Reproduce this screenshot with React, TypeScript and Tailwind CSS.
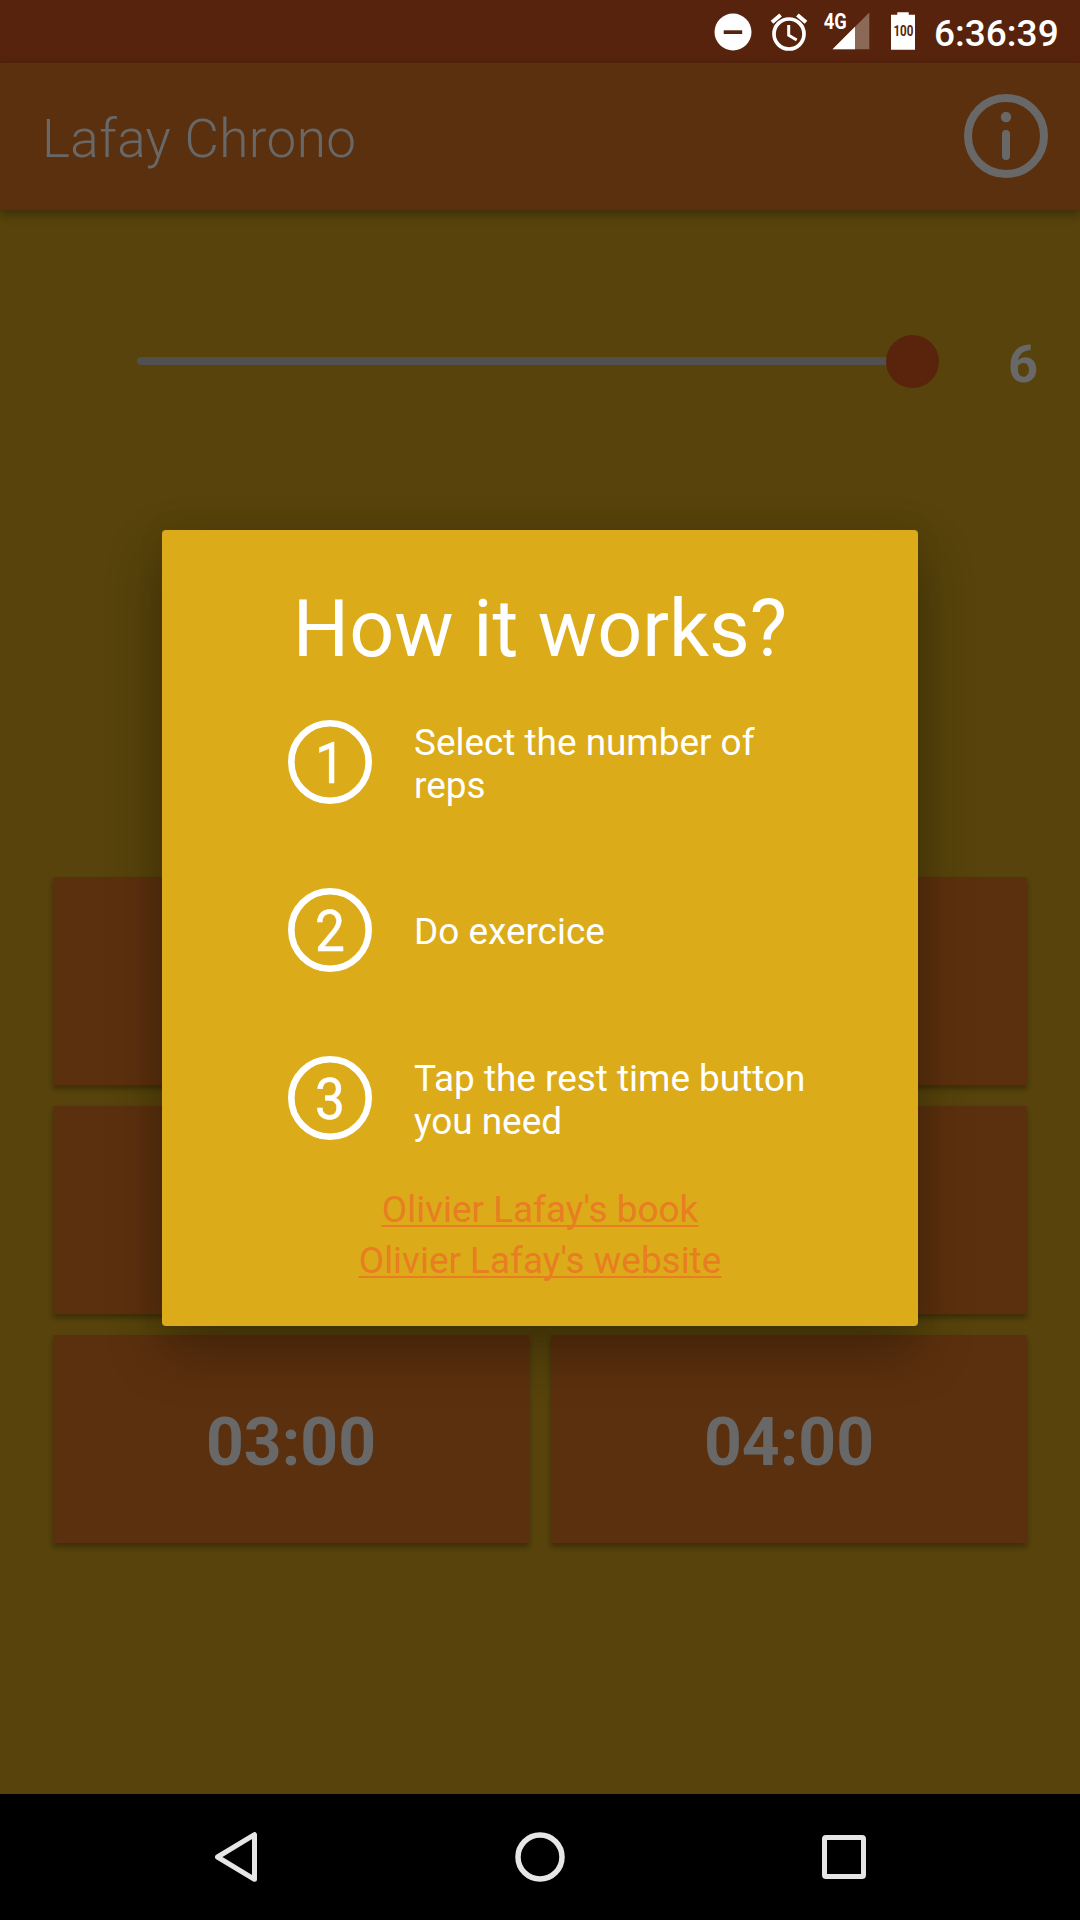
import React from "react";

function StatusBar() {
  return (
    <div className="flex h-[63px] w-full shrink-0 items-start bg-[#57230c] pl-[714px] text-white">
      <svg className="h-[63px] w-[215px] shrink-0" viewBox="714 0 215 63" fill="none">
        <circle cx="733" cy="32" r="18.5" fill="#fff" />
        <rect x="723.7" y="30.3" width="18.5" height="3.7" fill="#57230c" />
        <g stroke="#fff">
          <circle cx="789" cy="34" r="15" strokeWidth="3.7" />
          <path d="M788.7 25v10.2l8 4.8" strokeWidth="3" />
          <path d="M772 22.2l8.6-7.2M806 22.2l-8.6-7.2" strokeWidth="4" />
        </g>
        <path d="M869.3 12.5v36.8H832.5z" fill="#8c6856" />
        <path d="M855 26.8v22.5H832.5z" fill="#fff" />
        <text x="823.7" y="29" fill="#fff" fontSize="21.5" fontWeight="700" textLength="23" lengthAdjust="spacingAndGlyphs">4G</text>
        <path d="M897.3 12.2h11.4v2.6h6.3v35h-24v-35h6.3z" fill="#fff" />
        <text x="893.4" y="36" fill="#57230c" fontSize="14" fontWeight="700" textLength="20" lengthAdjust="spacingAndGlyphs">100</text>
      </svg>
      <span className="ml-[5px] mt-[12px] whitespace-nowrap text-[37px] font-medium leading-[43px]">6:36:39</span>
    </div>
  );
}

function AppBar() {
  return (
    <header className="relative flex h-[147px] w-full shrink-0 items-center justify-between bg-[#5b300e] pl-[42px] pr-8 text-[#686868] shadow-[0_4px_10px_rgba(0,0,0,0.35)]">
      <h1 className="mt-[5px] text-[53px] font-light leading-[62px] tracking-[0.4px]">Lafay Chrono</h1>
      <svg className="-mt-px h-[84px] w-[84px]" viewBox="0 0 84 84">
        <circle cx="42" cy="42" r="38" fill="none" stroke="currentColor" strokeWidth="8" />
        <circle cx="42" cy="23" r="5.2" fill="currentColor" />
        <rect x="38" y="36" width="8" height="30" rx="4" fill="currentColor" />
      </svg>
    </header>
  );
}

function RepsSlider() {
  return (
    <div className="flex h-[53px] items-center pl-[137px]">
      <div className="mb-[2px] h-2 w-[752px] rounded-l-full bg-[#505050]" />
      <div className="-ml-[3px] h-[53px] w-[53px] shrink-0 rounded-full bg-[#5a240c]" />
      <span className="ml-[69px] mt-[4px] text-[52.5px] font-bold leading-[62px] text-[#686868]">6</span>
    </div>
  );
}

/* The first two rows lie behind the dialog, so only the last row is labelled. */
const times = ["", "", "", "", "03:00", "04:00"];

function TimeGrid() {
  return (
    <div className="mx-[53px] mt-[489px] grid grid-cols-2 gap-x-[22px] gap-y-[21px]">
      {times.map((t, i) => (
        <button
          key={i}
          className="flex h-[208px] items-center justify-center bg-[#5b300e] pt-[7px] text-[66px] font-bold text-[#686868] shadow-[0_4px_5px_rgba(0,0,0,0.3)]"
        >
          {t}
        </button>
      ))}
    </div>
  );
}

function Step({ n, children }: { n: number; children: React.ReactNode }) {
  return (
    <li className="flex h-[168px] items-center">
      <svg className="h-[84px] w-[84px] shrink-0" viewBox="0 0 84 84">
        <circle cx="42" cy="42" r="38.7" fill="none" stroke="#fff" strokeWidth="6.6" />
        <text x="27" y="62.7" fontSize="58" fill="#fff" stroke="#fff" strokeWidth="0.5" textLength="30" lengthAdjust="spacingAndGlyphs">{n}</text>
      </svg>
      <p className="ml-[42px] mt-[3px] w-[400px] text-[36.9px] leading-[43px]">{children}</p>
    </li>
  );
}

function HelpDialog() {
  return (
    <div className="absolute inset-0 flex items-start justify-center pt-[530px]">
      <div
        role="dialog"
        className="flex h-[796px] w-[756px] flex-col rounded-[4px] bg-[#dbab19] text-white shadow-[0_24px_56px_rgba(0,0,0,0.3),0_0_32px_rgba(0,0,0,0.05)]"
      >
        <h2 className="mt-[53px] text-center text-[79px] leading-[92px]">How it works?</h2>
        <ol className="mt-[3px] pl-[126px]">
          <Step n={1}>Select the number of<br />reps</Step>
          <Step n={2}>Do exercice</Step>
          <Step n={3}>Tap the rest time button<br />you need</Step>
        </ol>
        <div className="mt-[2px] flex flex-col items-center text-[36.9px] leading-[51px] text-[#e87d22] underline decoration-2 underline-offset-[3px] [text-decoration-skip-ink:none]">
          <a>Olivier Lafay's book</a>
          <a>Olivier Lafay's website</a>
        </div>
      </div>
    </div>
  );
}

function NavBar() {
  return (
    <nav className="flex h-[126px] w-full shrink-0 items-center bg-black pl-[211px]">
      <svg className="h-[54px] w-[50px]" viewBox="0 0 50 54" fill="none" stroke="#e6e6e6" strokeWidth="5" strokeLinejoin="round">
        <path d="M43.5 4.7v44.6L6.5 27z" />
      </svg>
      <svg className="ml-[252px] h-[54px] w-[54px]" viewBox="0 0 54 54" fill="none" stroke="#e6e6e6" strokeWidth="5.5">
        <circle cx="27" cy="27" r="22" />
      </svg>
      <svg className="ml-[250px] h-[54px] w-[54px]" viewBox="0 0 54 54" fill="none" stroke="#e6e6e6" strokeWidth="5">
        <rect x="7.5" y="7.5" width="39" height="39" rx="1.5" />
      </svg>
    </nav>
  );
}

export default function App() {
  return (
    <div className="relative flex h-[1920px] w-[1080px] flex-col overflow-hidden bg-[#57430b] font-['Roboto',sans-serif]">
      <StatusBar />
      <AppBar />
      <main className="flex-1 pt-[125px]">
        <RepsSlider />
        <TimeGrid />
      </main>
      <NavBar />
      <HelpDialog />
    </div>
  );
}
